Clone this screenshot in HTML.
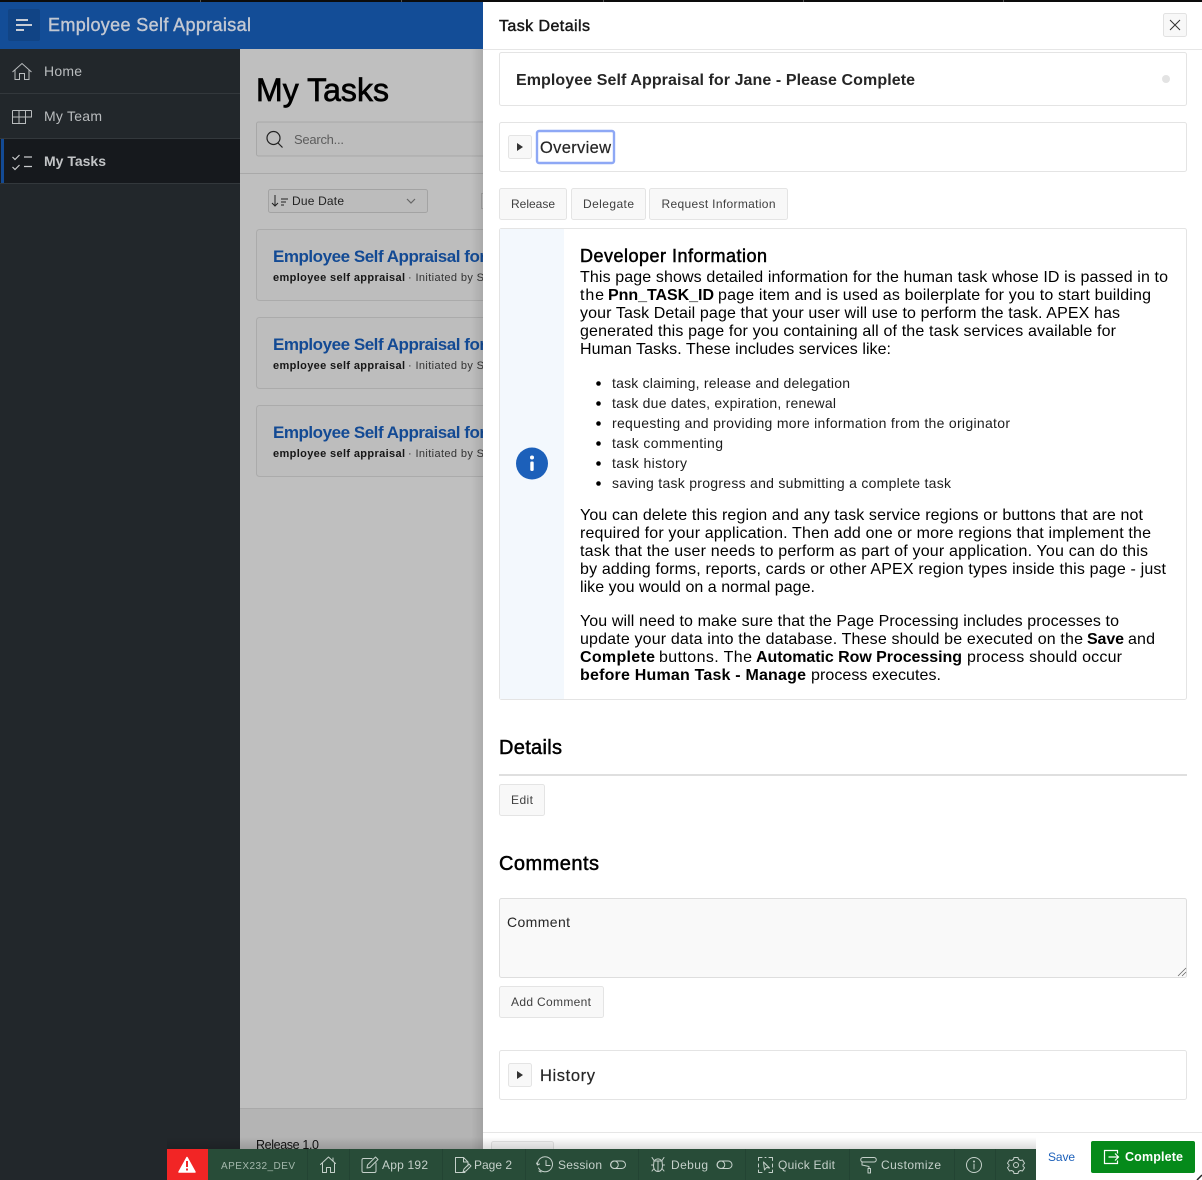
<!DOCTYPE html>
<html><head><meta charset="utf-8"><title>Task Details</title>
<style>
html,body{margin:0;padding:0;background:#fff;width:1202px;height:1180px;overflow:hidden}
svg{display:block;position:absolute;left:0;top:0}
text{font-family:"Liberation Sans",sans-serif;white-space:pre}
.b{font-weight:700}
.body{font-size:16px;fill:#000}
.li{font-size:14px;fill:#1c1c1c}
.btn{font-size:12px;fill:#404040}
.tb{font-size:12px;fill:#c5d0ca}
.ic{fill:none;stroke:#c5d0ca;stroke-width:1;stroke-linecap:round;stroke-linejoin:round}
.side{fill:none;stroke:#b9bcbe;stroke-width:1}
</style></head><body>
<svg width="1202" height="1180" viewBox="0 0 1202 1180" xmlns="http://www.w3.org/2000/svg">
<defs>
<linearGradient id="dsh" x1="0" x2="1" y1="0" y2="0"><stop offset="0" stop-color="#000" stop-opacity="0"/><stop offset="1" stop-color="#000" stop-opacity=".1"/></linearGradient>
<linearGradient id="tsh" x1="0" x2="0" y1="0" y2="1"><stop offset="0" stop-color="#000" stop-opacity="0"/><stop offset="1" stop-color="#000" stop-opacity=".14"/></linearGradient>
</defs>

<!-- main -->
<rect x="240" y="49" width="243" height="1131" fill="#bfbfbf"/>
<rect x="240" y="1108" width="243" height="72" fill="#b4b4b4"/>
<rect x="240" y="1108" width="243" height="1" fill="#a9a9a9"/>
<text x="256" y="101" font-size="32" fill="#000" stroke="#000" stroke-width=".7" textLength="133" lengthAdjust="spacing">My Tasks</text>
<rect x="256.500" y="122" width="240" height="34" rx="2" fill="#bdbdbd" stroke="#a8a8a8"/>
<circle cx="273.500" cy="138" r="6.500" fill="none" stroke="#222" stroke-width="1.200"/><path d="M278 143l4.500 4.500" stroke="#222" stroke-width="1.200"/>
<text x="294" y="144" font-size="13" fill="#5d5d5d" textLength="50" lengthAdjust="spacing">Search...</text>
<rect x="240" y="173" width="243" height="1" fill="#a9a9a9"/>
<rect x="268.500" y="189.500" width="159" height="23" rx="2" fill="#bcbcbc" stroke="#a3a3a3"/>
<path d="M275 195v11M272 203l3 3 3-3M281 199h7M281 202h5M281 205h3" fill="none" stroke="#222" stroke-width="1"/>
<text x="292" y="205" font-size="12" fill="#222" textLength="52" lengthAdjust="spacing">Due Date</text>
<path d="M407 199l4 4 4-4" fill="none" stroke="#666" stroke-width="1.200"/>
<rect x="481.500" y="193.500" width="10" height="15" fill="none" stroke="#a3a3a3"/>

<g>
<rect x="256.500" y="229.500" width="240" height="71" rx="3" fill="#bdbdbd" stroke="#ababab"/>
<text x="273" y="262" font-size="17" class="b" fill="#134a94" textLength="213" lengthAdjust="spacing">Employee Self Appraisal for</text>
<text x="273" y="281" font-size="11" class="b" fill="#161616" textLength="132" lengthAdjust="spacing">employee self appraisal</text>
<text x="408" y="281" font-size="11" fill="#333" textLength="76" lengthAdjust="spacing">· Initiated by S</text>
<rect x="256.500" y="317.500" width="240" height="71" rx="3" fill="#bdbdbd" stroke="#ababab"/>
<text x="273" y="350" font-size="17" class="b" fill="#134a94" textLength="213" lengthAdjust="spacing">Employee Self Appraisal for</text>
<text x="273" y="369" font-size="11" class="b" fill="#161616" textLength="132" lengthAdjust="spacing">employee self appraisal</text>
<text x="408" y="369" font-size="11" fill="#333" textLength="76" lengthAdjust="spacing">· Initiated by S</text>
<rect x="256.500" y="405.500" width="240" height="71" rx="3" fill="#bdbdbd" stroke="#ababab"/>
<text x="273" y="438" font-size="17" class="b" fill="#134a94" textLength="213" lengthAdjust="spacing">Employee Self Appraisal for</text>
<text x="273" y="457" font-size="11" class="b" fill="#161616" textLength="132" lengthAdjust="spacing">employee self appraisal</text>
<text x="408" y="457" font-size="11" fill="#333" textLength="76" lengthAdjust="spacing">· Initiated by S</text>
</g>
<text x="256" y="1149" font-size="12.500" fill="#111" textLength="63" lengthAdjust="spacing">Release 1.0</text>

<!-- sidebar -->
<rect x="0" y="49" width="240" height="1131" fill="#22272b"/>
<rect x="0" y="93" width="240" height="1" fill="#33383c"/>
<rect x="0" y="138" width="240" height="1" fill="#33383c"/>
<rect x="0" y="139" width="240" height="44" fill="#16191d"/>
<rect x="0" y="183" width="240" height="1" fill="#33383c"/>
<rect x="1" y="139" width="3" height="44" fill="#134a94"/>
<path class="side" d="M12.500 72l9.500-8.500 9.500 8.500M15 70v9.500h4.500v-6h5v6H29V70"/>
<path class="side" d="M12.500 110.500h19M12.500 110.500v13h13v-13M12.500 117h13M19 110.500v13M25.500 117h6v-6.500"/>
<path d="M12.500 157l2.500 2.500 4.500-4.500M12.500 167l2.500 2.500 4.500-4.500M24 157h8M24 166.500h8" fill="none" stroke="#c9cbcd" stroke-width="1.200"/>
<text x="44" y="76" font-size="14" fill="#b9bcbe" textLength="38" lengthAdjust="spacing">Home</text>
<text x="44" y="121" font-size="14" fill="#b9bcbe" textLength="58" lengthAdjust="spacing">My Team</text>
<text x="44" y="166" font-size="14" class="b" fill="#c2c4c6" textLength="62" lengthAdjust="spacing">My Tasks</text>

<!-- header -->
<rect x="0" y="0" width="1202" height="2" fill="#0c0c0c"/>
<g fill="#555"><rect x="200" y="0" width="1" height="2"/><rect x="401" y="0" width="1" height="2"/><rect x="603" y="0" width="1" height="2"/><rect x="803" y="0" width="1" height="2"/><rect x="1003" y="0" width="1" height="2"/></g>
<rect x="0" y="2" width="483" height="47" fill="#134d97"/>
<rect x="8" y="9" width="32" height="32" rx="2" fill="#114485"/>
<rect x="16" y="19" width="12" height="2" fill="#c8cdd6"/>
<rect x="16" y="24" width="16" height="2" fill="#c8cdd6"/>
<rect x="16" y="29" width="8" height="2" fill="#c8cdd6"/>
<text x="48" y="31" font-size="18" fill="#c3c8d2" stroke="#c3c8d2" stroke-width=".4" textLength="203" lengthAdjust="spacing">Employee Self Appraisal</text>

<!-- drawer shadow -->
<rect x="471" y="49" width="12" height="1131" fill="url(#dsh)"/>

<!-- drawer -->
<rect x="483" y="2" width="719" height="1178" fill="#fff"/>
<text x="499" y="31" font-size="16" fill="#161616" stroke="#161616" stroke-width=".45" textLength="91" lengthAdjust="spacing">Task Details</text>
<rect x="483" y="49" width="719" height="1" fill="#e6e6e6"/>
<rect x="1163.500" y="13.500" width="23" height="23" rx="2" fill="#f8f8f8" stroke="#e2e2e2"/>
<path d="M1170 20l10 10M1180 20l-10 10" stroke="#333" stroke-width="1" fill="none"/>

<rect x="499.500" y="52.500" width="687" height="53" rx="2" fill="#fff" stroke="#e4e4e4"/>
<text x="516" y="85" font-size="16" class="b" fill="#262626" textLength="399" lengthAdjust="spacing">Employee Self Appraisal for Jane - Please Complete</text>
<circle cx="1166" cy="79" r="4" fill="#e3e3e3"/>

<rect x="499.500" y="122.500" width="687" height="49" rx="2" fill="#fff" stroke="#e4e4e4"/>
<rect x="508.500" y="135.500" width="23" height="23" rx="2" fill="#f8f8f8" stroke="#e4e4e4"/>
<path d="M517 143v8l6-4z" fill="#333"/>
<rect x="537" y="131" width="77" height="32" rx="2" fill="#fff" stroke="#8ea8f5" stroke-width="2.400"/>
<text x="540" y="153" font-size="16.500" fill="#262626" stroke="#262626" stroke-width=".2" textLength="71" lengthAdjust="spacing">Overview</text>
<rect x="499.500" y="188.500" width="67" height="31" rx="2" fill="#f8f8f8" stroke="#e4e4e4"/>
<text x="511" y="208" class="btn" textLength="44" lengthAdjust="spacing">Release</text>
<rect x="571.500" y="188.500" width="74" height="31" rx="2" fill="#f8f8f8" stroke="#e4e4e4"/>
<text x="583" y="208" class="btn" textLength="51" lengthAdjust="spacing">Delegate</text>
<rect x="649.500" y="188.500" width="138" height="31" rx="2" fill="#f8f8f8" stroke="#e4e4e4"/>
<text x="661.500" y="208" class="btn" textLength="114" lengthAdjust="spacing">Request Information</text>

<!-- info card -->
<rect x="499.500" y="228.500" width="687" height="471" rx="2" fill="#fff" stroke="#e4e4e4"/>
<rect x="500" y="229" width="64" height="470" fill="#f3f8fd"/>
<circle cx="532" cy="463.500" r="16" fill="#1c60ba"/>
<circle cx="532" cy="457.500" r="2" fill="#fff"/>
<rect x="530.300" y="461.500" width="3.400" height="9.500" rx="1.200" fill="#fff"/>
<text x="580" y="262" font-size="18" fill="#000" stroke="#000" stroke-width=".5" textLength="187" lengthAdjust="spacing">Developer Information</text>
<text x="580" y="282" class="body" textLength="588" lengthAdjust="spacing">This page shows detailed information for the human task whose ID is passed in to</text>
<text x="580" y="300" class="body" textLength="24" lengthAdjust="spacing">the</text>
<text x="608" y="300" class="body b" textLength="106" lengthAdjust="spacing">Pnn_TASK_ID</text>
<text x="718" y="300" class="body" textLength="433" lengthAdjust="spacing">page item and is used as boilerplate for you to start building</text>
<text x="580" y="318" class="body" textLength="540" lengthAdjust="spacing">your Task Detail page that your user will use to perform the task. APEX has</text>
<text x="580" y="336" class="body" textLength="536" lengthAdjust="spacing">generated this page for you containing all of the task services available for</text>
<text x="580" y="354" class="body" textLength="311" lengthAdjust="spacing">Human Tasks. These includes services like:</text>

<g fill="#000"><circle cx="598.500" cy="383.500" r="2.300"/><circle cx="598.500" cy="403.500" r="2.300"/><circle cx="598.500" cy="423.500" r="2.300"/><circle cx="598.500" cy="443.500" r="2.300"/><circle cx="598.500" cy="463.500" r="2.300"/><circle cx="598.500" cy="483.500" r="2.300"/></g>
<text x="612" y="388" class="li" textLength="238" lengthAdjust="spacing">task claiming, release and delegation</text>
<text x="612" y="408" class="li" textLength="224" lengthAdjust="spacing">task due dates, expiration, renewal</text>
<text x="612" y="428" class="li" textLength="398" lengthAdjust="spacing">requesting and providing more information from the originator</text>
<text x="612" y="448" class="li" textLength="111" lengthAdjust="spacing">task commenting</text>
<text x="612" y="468" class="li" textLength="75" lengthAdjust="spacing">task history</text>
<text x="612" y="488" class="li" textLength="339" lengthAdjust="spacing">saving task progress and submitting a complete task</text>

<text x="580" y="520" class="body" textLength="563" lengthAdjust="spacing">You can delete this region and any task service regions or buttons that are not</text>
<text x="580" y="538" class="body" textLength="571" lengthAdjust="spacing">required for your application. Then add one or more regions that implement the</text>
<text x="580" y="556" class="body" textLength="568" lengthAdjust="spacing">task that the user needs to perform as part of your application. You can do this</text>
<text x="580" y="574" class="body" textLength="586" lengthAdjust="spacing">by adding forms, reports, cards or other APEX region types inside this page - just</text>
<text x="580" y="592" class="body" textLength="235" lengthAdjust="spacing">like you would on a normal page.</text>

<text x="580" y="626" class="body" textLength="539" lengthAdjust="spacing">You will need to make sure that the Page Processing includes processes to</text>
<text x="580" y="644" class="body" textLength="503" lengthAdjust="spacing">update your data into the database. These should be executed on the</text>
<text x="1087" y="644" class="body b" textLength="37" lengthAdjust="spacing">Save</text>
<text x="1128" y="644" class="body" textLength="27" lengthAdjust="spacing">and</text>
<text x="580" y="662" class="body b" textLength="75" lengthAdjust="spacing">Complete</text>
<text x="659" y="662" class="body" textLength="93" lengthAdjust="spacing">buttons. The</text>
<text x="756" y="662" class="body b" textLength="206" lengthAdjust="spacing">Automatic Row Processing</text>
<text x="967" y="662" class="body" textLength="155" lengthAdjust="spacing">process should occur</text>
<text x="580" y="680" class="body b" textLength="226" lengthAdjust="spacing">before Human Task - Manage</text>
<text x="811" y="680" class="body" textLength="130" lengthAdjust="spacing">process executes.</text>

<!-- details -->
<text x="499" y="754" font-size="20" fill="#000" stroke="#000" stroke-width=".5" textLength="63" lengthAdjust="spacing">Details</text>
<rect x="499" y="774" width="688" height="2" fill="#dfdfdf"/>
<rect x="499.500" y="784.500" width="45" height="31" rx="2" fill="#f8f8f8" stroke="#e4e4e4"/>
<text x="511" y="804" class="btn" textLength="22" lengthAdjust="spacing">Edit</text>

<text x="499" y="870" font-size="20" fill="#000" stroke="#000" stroke-width=".5" textLength="100" lengthAdjust="spacing">Comments</text>
<rect x="499.500" y="898.500" width="687" height="79" rx="2" fill="#f9f9f9" stroke="#dedede"/>
<text x="507" y="927" font-size="14" fill="#262626" textLength="63" lengthAdjust="spacing">Comment</text>
<path d="M1178 976l8-8M1182 976l4-4" stroke="#666" stroke-width=".8"/>
<rect x="499.500" y="986.500" width="104" height="31" rx="2" fill="#f8f8f8" stroke="#e4e4e4"/>
<text x="511" y="1006" class="btn" textLength="80" lengthAdjust="spacing">Add Comment</text>

<rect x="499.500" y="1050.500" width="687" height="49" rx="2" fill="#fff" stroke="#e4e4e4"/>
<rect x="508.500" y="1063.500" width="23" height="23" rx="2" fill="#f8f8f8" stroke="#e4e4e4"/>
<path d="M517 1071v8l6-4z" fill="#333"/>
<text x="540" y="1081" font-size="16.500" fill="#262626" stroke="#262626" stroke-width=".2" textLength="55" lengthAdjust="spacing">History</text>

<!-- dialog footer -->
<rect x="483" y="1132" width="719" height="1" fill="#e6e6e6"/>
<rect x="491.500" y="1141.500" width="62" height="31" rx="2" fill="#f8f8f8" stroke="#e4e4e4"/>
<text x="1048" y="1161" font-size="12" fill="#1c60ba" textLength="27" lengthAdjust="spacing">Save</text>
<rect x="1091" y="1141" width="104" height="32" rx="2" fill="#058a1a"/>
<path d="M1117.500 1153.500v-3h-13v13h13v-3M1108.500 1157h10M1115 1153.500l3.500 3.500-3.500 3.500" fill="none" stroke="#fff" stroke-width="1.200"/>
<text x="1125" y="1161" font-size="12.500" class="b" fill="#fff" textLength="58" lengthAdjust="spacing">Complete</text>
<path d="M1197 1180l5-5" stroke="#222" stroke-width="1.500"/>

<!-- dev toolbar -->
<rect x="167" y="1137" width="869" height="12" fill="url(#tsh)"/>
<rect x="167" y="1149" width="869" height="31" fill="#284c38"/>
<rect x="167" y="1149" width="41" height="31" fill="#f22525"/>
<path d="M187 1157.500l8 14.500h-16z" fill="#fff" stroke="#fff" stroke-width="1.500" stroke-linejoin="round"/>
<rect x="186" y="1161" width="2" height="6" fill="#f22525"/><rect x="186" y="1168.500" width="2" height="2" fill="#f22525"/>
<text x="221" y="1169" font-size="10" fill="#a4b8ac" textLength="74" lengthAdjust="spacing">APEX232_DEV</text>
<g fill="#234433"><rect x="307" y="1149" width="1" height="31"/><rect x="349" y="1149" width="1" height="31"/><rect x="442" y="1149" width="1" height="31"/><rect x="525" y="1149" width="1" height="31"/><rect x="638" y="1149" width="1" height="31"/><rect x="745" y="1149" width="1" height="31"/><rect x="849" y="1149" width="1" height="31"/><rect x="954" y="1149" width="1" height="31"/><rect x="995" y="1149" width="1" height="31"/></g>
<path class="ic" d="M320.500 1164.500l8-7.500 7 6.500M322.500 1163v9.500h4v-5h4v5h4v-9.500M333 1158v3"/>
<path class="ic" d="M372 1158.500h-8.500a1.500 1.500 0 0 0-1.500 1.500v11a1.500 1.500 0 0 0 1.500 1.500h11a1.500 1.500 0 0 0 1.500-1.500v-8M367 1168l.5-3 8-8 2.500 2.500-8 8z"/>
<text x="382" y="1169" class="tb" textLength="46" lengthAdjust="spacing">App 192</text>
<path class="ic" d="M465 1172.500h-9.500v-15h8l4.500 4.500v4M463.500 1157.500v4.500h4.500M463 1172l1-3 5-5 2 2-5 5z"/>
<text x="474" y="1169" class="tb" textLength="38" lengthAdjust="spacing">Page 2</text>
<path class="ic" d="M538.500 1168a7.500 7.500 0 1 0-1-3.500M536.500 1163l1 2 2-1M546 1160.500v5h4M539 1171l2 1"/>
<text x="558" y="1169" class="tb" textLength="44" lengthAdjust="spacing">Session</text>
<rect class="ic" x="610.500" y="1161" width="15" height="7.500" rx="3.750"/><circle class="ic" cx="614.500" cy="1164.750" r="3.750"/>
<path class="ic" d="M655 1160a4.500 4.500 0 0 1 6 0M654 1161h8l.5 5a4.500 5.500 0 0 1-9 0zM658 1161v10M652 1157.500l2 3M664 1157.500l-2 3M651.500 1165h2M662.500 1165h2M652 1171l2-2.500M664 1171l-2-2.500"/>
<text x="671" y="1169" class="tb" textLength="37" lengthAdjust="spacing">Debug</text>
<rect class="ic" x="717" y="1161" width="15" height="7.500" rx="3.750"/><circle class="ic" cx="721" cy="1164.750" r="3.750"/>
<path class="ic" d="M762 1157.500h-3.500v3M769 1157.500h3.500v3M758.500 1164v3M772.500 1164v3M758.500 1170v2.500h3.500M769 1172.500h3.500v-2.500M765 1157.500h1M763.500 1162l1 8 2-2.500 3 .5z"/>
<text x="778" y="1169" class="tb" textLength="57" lengthAdjust="spacing">Quick Edit</text>
<path class="ic" d="M863 1157.500h11a1.500 1.500 0 0 1 0 4.500h-11a2 2 0 0 1 0-4.500zM862 1162v3l7 1.500v2M868 1168.500h2.500v4.500h-2.500z"/>
<text x="881" y="1169" class="tb" textLength="60" lengthAdjust="spacing">Customize</text>
<circle class="ic" cx="974" cy="1165" r="7.500"/><circle cx="974" cy="1161.500" r="1" fill="#c5d0ca"/><path class="ic" d="M974 1164v5"/>
<circle class="ic" cx="1016" cy="1165" r="2.500"/>
<path class="ic" d="M1014 1157.500h4l.5 2 2 1 2-.5 2 3.300-1.500 1.500v1.400l1.500 1.500-2 3.300-2-.5-2 1-.5 2h-4l-.5-2-2-1-2 .5-2-3.300 1.500-1.500v-1.400l-1.500-1.500 2-3.300 2 .5 2-1z"/>
</svg>
</body></html>
